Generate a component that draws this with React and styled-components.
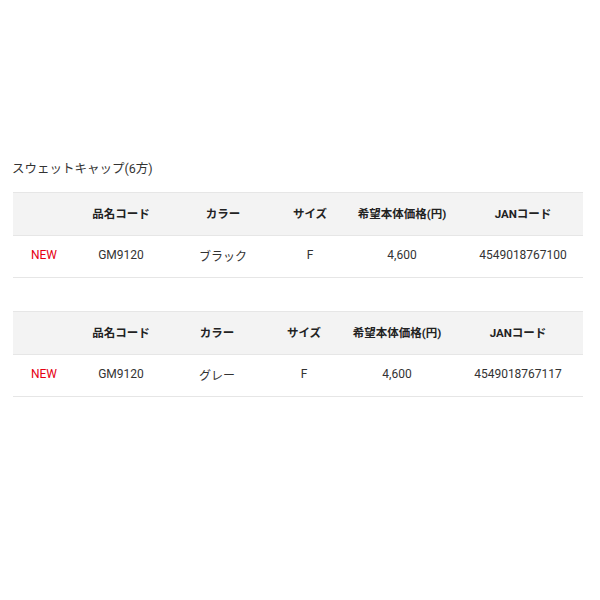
import React from "react";
import styled, { createGlobalStyle } from "styled-components";

const GlobalStyle = createGlobalStyle`
  body {
    margin: 0;
    background: #fff;
    font-family: Roboto, "Noto Sans CJK JP", sans-serif;
    color: #333;
  }
`;

const Page = styled.div`
  padding: 160px 17px 0 12px;
`;

const Title = styled.h2`
  margin: 0 0 14px;
  font-size: 12.5px;
  font-weight: 400;
  line-height: 18px;
  color: #333;
`;

const Table = styled.table`
  width: 570px;
  margin-left: 1px;
  border-collapse: collapse;
  table-layout: fixed;
  font-size: 12px;
  margin-bottom: 33px;
`;

const HeadCell = styled.th`
  background: #f3f3f3;
  border-top: 1px solid #e6e6e6;
  border-bottom: 1px solid #e6e6e6;
  height: 40px;
  padding: 0 0 2px;
  font-size: 11.5px;
  font-weight: 700;
  color: #222;
  text-align: center;
`;

const Cell = styled.td`
  border-bottom: 1px solid #e6e6e6;
  height: 38px;
  padding: 0 0 3px;
  text-align: center;
  color: ${({ $red }) => ($red ? "#e60012" : "#333")};
`;

const heads = ["", "品名コード", "カラー", "サイズ", "希望本体価格(円)", "JANコード"];

const items = [
  {
    code: "GM9120",
    color: "ブラック",
    size: "F",
    price: "4,600",
    jan: "4549018767100",
    cols: [62, 92, 112, 62, 122, 120],
  },
  {
    code: "GM9120",
    color: "グレー",
    size: "F",
    price: "4,600",
    jan: "4549018767117",
    cols: [62, 92, 100, 74, 112, 130],
  },
];

const ProductTable = ({ item }) => (
  <Table>
    <colgroup>
      {item.cols.map((w, i) => (
        <col key={i} style={{ width: w }} />
      ))}
    </colgroup>
    <thead>
      <tr>
        {heads.map((h, i) => (
          <HeadCell key={i}>{h}</HeadCell>
        ))}
      </tr>
    </thead>
    <tbody>
      <tr>
        <Cell $red>NEW</Cell>
        <Cell>{item.code}</Cell>
        <Cell>{item.color}</Cell>
        <Cell>{item.size}</Cell>
        <Cell>{item.price}</Cell>
        <Cell>{item.jan}</Cell>
      </tr>
    </tbody>
  </Table>
);

export default function App() {
  return (
    <Page>
      <GlobalStyle />
      <Title>スウェットキャップ(6方)</Title>
      {items.map((item, i) => (
        <ProductTable key={i} item={item} />
      ))}
    </Page>
  );
}
